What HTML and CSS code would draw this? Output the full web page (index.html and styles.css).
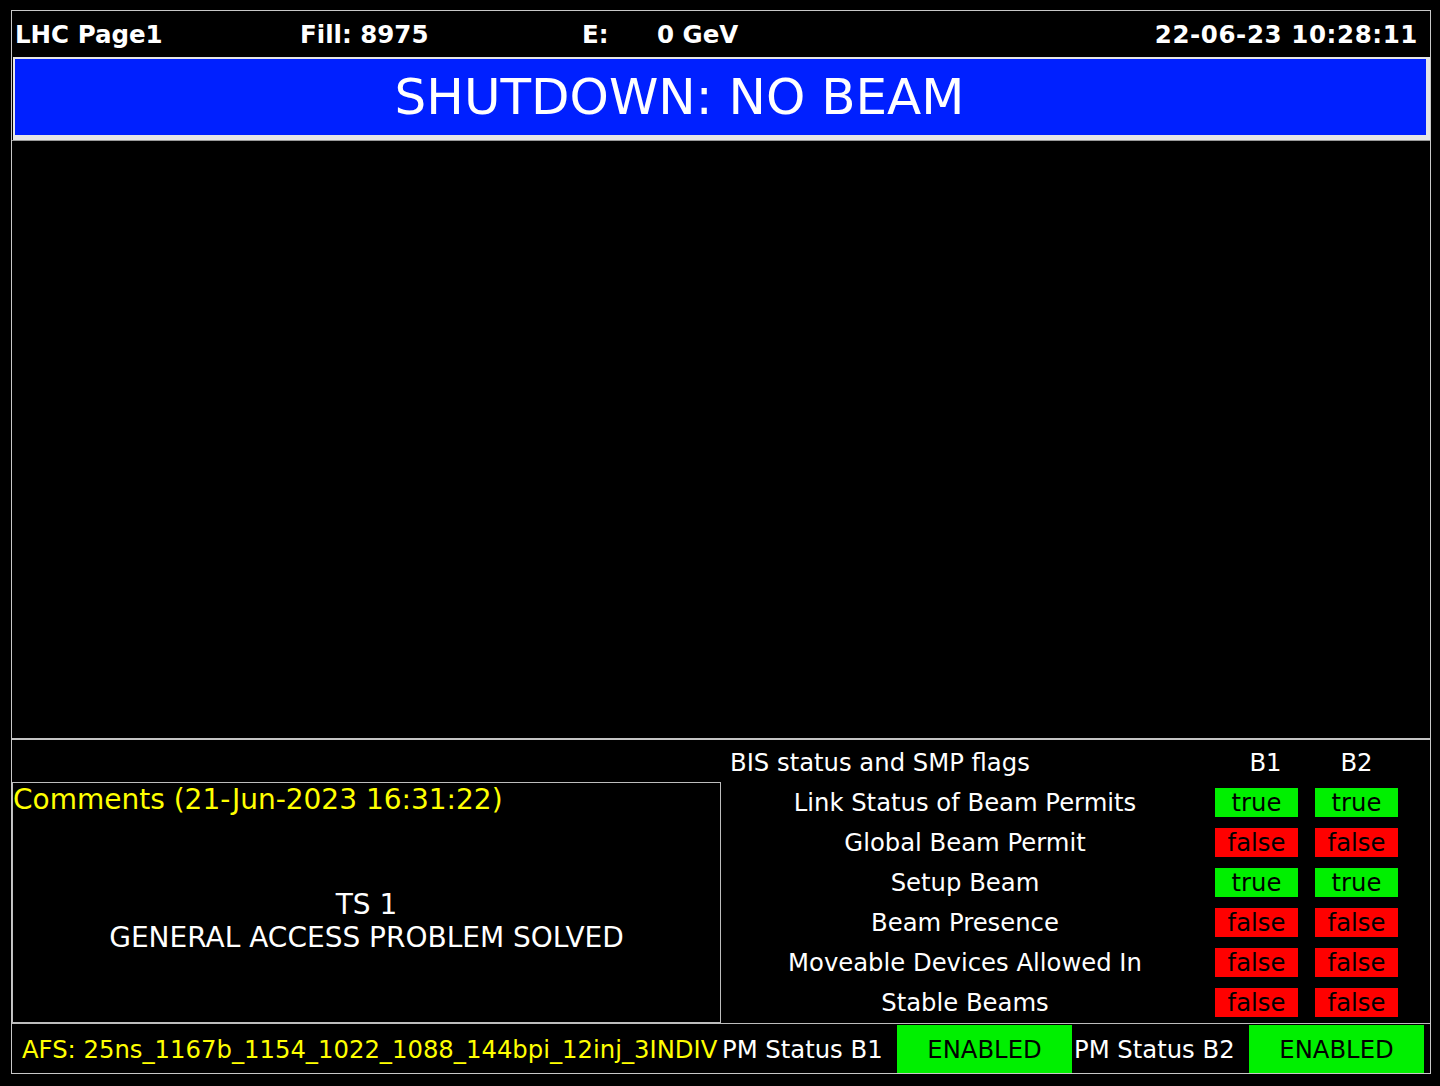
FILE: index.html
```html
<!DOCTYPE html>
<html lang="en">
<head>
    <meta charset="UTF-8">
    <title>LHC Page1</title>
    <link rel="stylesheet" href="styles.css">
</head>
<body>
<div class="screen">
    <!-- Top line: page name, fill number, energy and clock -->
    <header class="topbar">
        <span class="page-name">LHC Page1</span>
        <span class="fill">Fill: 8975</span>
        <span class="energy-label">E:</span>
        <span class="energy">0 GeV</span>
        <span class="clock">22-06-23 10:28:11</span>
    </header>

    <div class="banner">
        <div class="banner-text">SHUTDOWN: NO BEAM</div>
    </div>

    <!-- Plot area, empty while there is no beam -->
    <main class="plot"></main>

    <section class="lower">
        <div class="comments-col">
            <div class="comments">
                <div class="comments-title">Comments (21-Jun-2023 16:31:22)</div>
                <div class="comments-body">
                    <p>TS 1</p>
                    <p>GENERAL ACCESS PROBLEM SOLVED</p>
                </div>
            </div>
        </div>

        <div class="flags">
            <div class="flags-title">BIS status and SMP flags</div>
            <div class="flags-head head-b1">B1</div>
            <div class="flags-head">B2</div>

            <div class="flag-name">Link Status of Beam Permits</div>
            <div class="flag on">true</div>
            <div class="flag on">true</div>

            <div class="flag-name">Global Beam Permit</div>
            <div class="flag off">false</div>
            <div class="flag off">false</div>

            <div class="flag-name">Setup Beam</div>
            <div class="flag on">true</div>
            <div class="flag on">true</div>

            <div class="flag-name">Beam Presence</div>
            <div class="flag off">false</div>
            <div class="flag off">false</div>

            <div class="flag-name">Moveable Devices Allowed In</div>
            <div class="flag off">false</div>
            <div class="flag off">false</div>

            <div class="flag-name">Stable Beams</div>
            <div class="flag off">false</div>
            <div class="flag off">false</div>
        </div>
    </section>

    <footer class="status-row">
        <div class="afs">AFS: 25ns_1167b_1154_1022_1088_144bpi_12inj_3INDIV</div>
        <div class="pm-label">PM Status B1</div>
        <div class="pm-state">ENABLED</div>
        <div class="pm-label pm-b2">PM Status B2</div>
        <div class="pm-state">ENABLED</div>
    </footer>
</div>
</body>
</html>
```

FILE: styles.css
```css
body {
    margin: 0;
    background-color: #000;
    color: #fff;
    font-family: "DejaVu Sans", "Liberation Sans", sans-serif;
    font-size: 24.3px;
}

/* Whole display frame */
.screen {
    margin: 10px 0 0 11px;
    width: 1420px;
    height: 1064px;
    border: 1px solid #c8c8c8;
    box-sizing: border-box;
    display: flex;
    flex-direction: column;
}

/* Top line */
.topbar {
    height: 46px;
    display: flex;
    align-items: center;
    padding: 0 12px 0 3px;
    font-weight: bold;
    font-size: 24.5px;
    white-space: nowrap;
}

.page-name {
    width: 285px;
}

.fill {
    width: 282px;
}

.energy-label {
    width: 75px;
}

.energy {
    flex: 1;
}

.clock {
    letter-spacing: 0.6px;
}

/* Machine mode banner */
.banner {
    height: 83px;
    margin-left: 1px;
    padding: 2px 4px 5px 2px;
    background-color: #e6e6e6;
    box-sizing: border-box;
}

.banner-text {
    height: 100%;
    background-color: #0020ff;
    display: flex;
    align-items: center;
    justify-content: center;
    padding-right: 82px;
    font-size: 50px;
}

.plot {
    height: 600px;
    border-top: 1px solid #9a9a9a;
    border-bottom: 2px solid #c4c4c4;
    box-sizing: border-box;
}

/* Lower half: comments and flags side by side */
.lower {
    height: 283px;
    display: flex;
}

.comments-col {
    width: 709px;
    padding-top: 42px;
}

.comments {
    height: 241px;
    border: 1px solid #bdbdbd;
    box-sizing: border-box;
    display: flex;
    flex-direction: column;
    font-size: 28px;
}

.comments-title {
    color: #ffff00;
    line-height: 33px;
}

.comments-body {
    flex: 1;
    display: flex;
    flex-direction: column;
    justify-content: center;
    align-items: center;
    padding-top: 4px;
}

.comments-body p {
    margin: 0;
    line-height: 33px;
}

.flags {
    flex: 1;
    display: grid;
    grid-template-columns: 476px 83px 83px;
    grid-template-rows: 37px;
    grid-auto-rows: 29px;
    column-gap: 17px;
    row-gap: 11px;
    padding-left: 1px;
}

.flags-title {
    align-self: end;
    padding-left: 8px;
    line-height: 28px;
}

.flags-head {
    align-self: end;
    text-align: center;
    line-height: 28px;
}

.head-b1 {
    padding-left: 18px;
}

.flag-name {
    padding-left: 10px;
    text-align: center;
    line-height: 29px;
}

.flag {
    color: #000;
    text-align: center;
    line-height: 29px;
}

.flag.on {
    background-color: #00f000;
}

.flag.off {
    background-color: #ff0000;
}

/* Bottom status line */
.status-row {
    flex: 1;
    display: flex;
    border-top: 1px solid #bdbdbd;
    padding: 1px 0 0;
    white-space: nowrap;
}

.afs {
    width: 710px;
    padding-left: 10px;
    box-sizing: border-box;
    color: #ffff00;
    display: flex;
    align-items: center;
}

.pm-label {
    width: 175px;
    display: flex;
    align-items: center;
}

.pm-b2 {
    margin-left: 2px;
}

.pm-state {
    width: 175px;
    background-color: #00f000;
    color: #000;
    display: flex;
    align-items: center;
    justify-content: center;
}
```
